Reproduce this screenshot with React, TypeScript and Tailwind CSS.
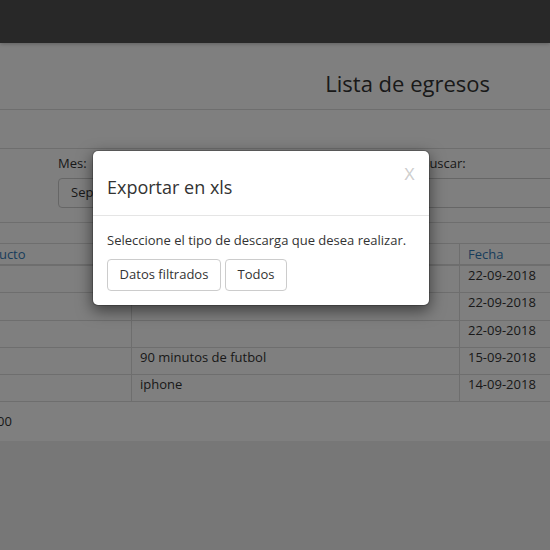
const rows = [
  { detalle: "", fecha: "22-09-2018", h: "h-[27px]" },
  { detalle: "", fecha: "22-09-2018", h: "h-[28px]" },
  { detalle: "", fecha: "22-09-2018", h: "h-[27px]" },
  { detalle: "90 minutos de futbol", fecha: "15-09-2018", h: "h-[27px]" },
  { detalle: "iphone", fecha: "14-09-2018", h: "h-[27px]" },
];

function ExportModal() {
  return (
    <div className="absolute left-[92px] top-[150px] z-30 w-[338px] rounded-[6px] border border-black/20 bg-white bg-clip-padding shadow-[0_5px_15px_rgba(0,0,0,0.5)]">
      <div className="relative border-b border-[#e5e5e5] px-[14px] pb-[15px] pt-[23px]">
        <h4 className="text-[18px] leading-[26px] text-[#333]">Exportar en xls</h4>
        <button className="absolute right-[14px] top-[11px] text-[21px] leading-[21px] text-black/20">
          x
        </button>
      </div>
      <div className="px-[14px] pb-[14px] pt-[15px]">
        <p className="mb-[9px] text-[13px] leading-[19px] text-[#333]">
          Seleccione el tipo de descarga que desea realizar.
        </p>
        <div className="flex gap-[4px]">
          <button className="flex h-[32px] w-[114px] items-center justify-center rounded-[4px] border border-[#ccc] bg-white text-[13px] text-[#333]">
            Datos filtrados
          </button>
          <button className="flex h-[32px] w-[62px] items-center justify-center rounded-[4px] border border-[#ccc] bg-white text-[13px] text-[#333]">
            Todos
          </button>
        </div>
      </div>
    </div>
  );
}

export default function App() {
  return (
    <div className="relative h-[550px] w-[550px] overflow-hidden bg-[#eee] font-['Open_Sans',sans-serif] text-[13px] text-[#333]">
      <nav className="relative z-10 h-[43px] bg-[#505050] shadow-[0_1px_4px_rgba(0,0,0,0.25)]" />

      <div className="bg-white">
        <div className="flex h-[67px] justify-end border-b border-[#ddd] pr-[60px] pt-[25px]">
          <h2 className="text-[22px] leading-[30px] text-[#333]">Lista de egresos</h2>
        </div>

        <div className="h-[39px] border-b border-[#ddd]" />

        <div className="flex h-[74px] gap-[20px] border-b border-[#ddd] pl-[58px] pt-[5px]">
          <div className="flex w-[160px] shrink-0 flex-col gap-[5px]">
            <label className="leading-[19px]">Mes:</label>
            <div className="flex h-[30px] items-center rounded-[4px] border border-[#ccc] px-[12px]">
              Septiembre
            </div>
          </div>
          <div className="flex w-[163px] shrink-0 flex-col gap-[5px]">
            <label className="leading-[19px]">Año:</label>
            <div className="flex h-[30px] items-center rounded-[4px] border border-[#ccc] px-[12px]">
              2018
            </div>
          </div>
          <div className="flex w-[200px] shrink-0 flex-col gap-[5px]">
            <label className="leading-[19px]">Buscar:</label>
            <div className="h-[30px] rounded-[4px] border border-[#ccc]" />
          </div>
        </div>

        <div className="h-[21px] border-b border-[#ddd]" />

        <div className="grid h-[22px] grid-cols-[132px_328px_1fr] border-b-2 border-[#ddd] leading-[18px] text-[#337ab7]">
          <div className="overflow-hidden whitespace-nowrap border-r border-[#ddd] pt-[1px]">
            <span className="-ml-[30px]">Producto</span>
          </div>
          <div className="border-r border-[#ddd] pl-[8px] pt-[1px]">Detalle</div>
          <div className="pl-[8px] pt-[1px]">Fecha</div>
        </div>

        {rows.map((r, i) => (
          <div
            key={i}
            className={`grid grid-cols-[132px_328px_1fr] border-b border-[#ddd] leading-[19px] ${r.h}`}
          >
            <div className="border-r border-[#ddd]" />
            <div className="border-r border-[#ddd] pl-[8px]">{r.detalle}</div>
            <div className="pl-[8px]">{r.fecha}</div>
          </div>
        ))}

        <div className="h-[39px] overflow-hidden whitespace-nowrap pt-[10px] leading-[19px]">
          <span className="-ml-[3px]">00</span>
        </div>
      </div>

      <div className="absolute inset-0 z-20 bg-black/50" />

      <ExportModal />
    </div>
  );
}
